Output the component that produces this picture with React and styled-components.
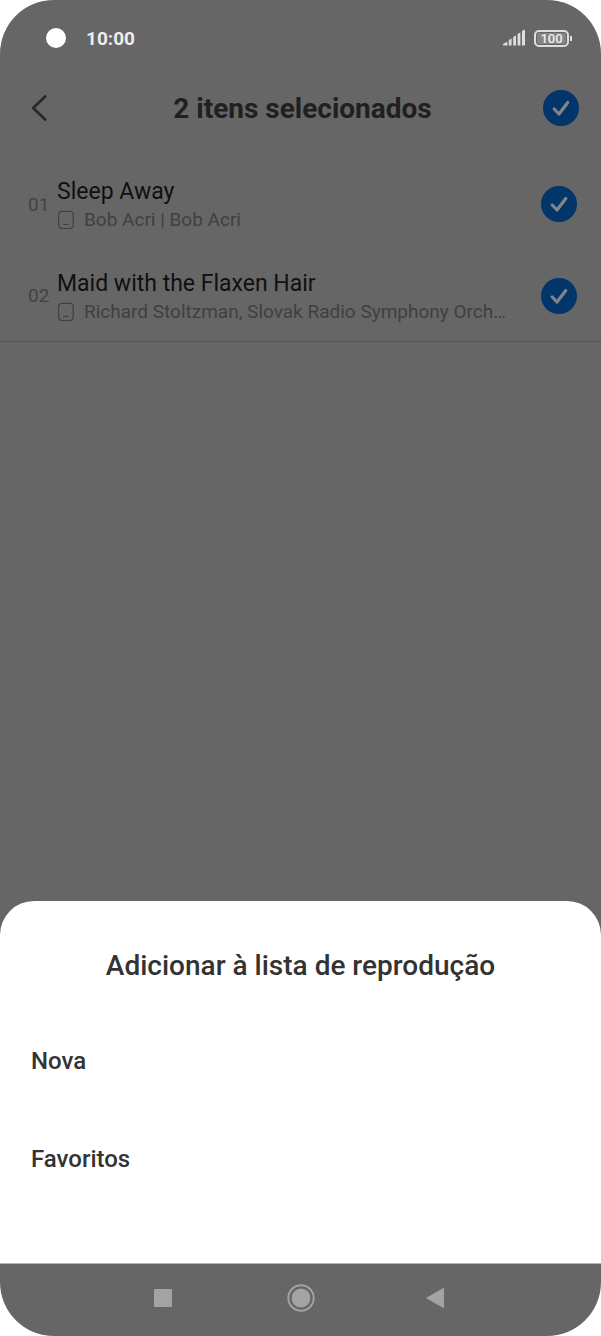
import styled, { createGlobalStyle } from "styled-components"

const GlobalStyle = createGlobalStyle`
    *{
        box-sizing: border-box;
    }
    body{
        margin: 0;
        background-color: #ffffff;
        font-family: Roboto, "Noto Sans", sans-serif;
    }
    button{
        border: none;
        padding: 0;
        background: none;
        font-family: inherit;
        cursor: pointer;
    }
`;

const Phone = styled.div`
    min-height: 100vh;
    display: flex;
    flex-direction: column;
    background-color: #666666;
    border-radius: 54px;
    overflow: hidden;
`;

const StatusBar = styled.div`
    height: 76px;
    display: flex;
    align-items: center;
    padding: 0 29px 0 46px;
`;

const Camera = styled.span`
    width: 20px;
    height: 20px;
    border-radius: 50%;
    background-color: #ffffff;
    margin-right: 20px;
`;

const Clock = styled.span`
    flex: 1;
    font-size: 19px;
    font-weight: 700;
    color: #ececec;
`;

const StatusIcons = styled.div`
    display: flex;
    align-items: center;
    gap: 8px;
`;

const Battery = styled.div`
    display: flex;
    align-items: center;
    gap: 1px;
    &:after{
        content: "";
        width: 2px;
        height: 5px;
        background-color: #dedede;
    }
`;

const BatteryLevel = styled.span`
    width: 35px;
    height: 17px;
    border: 2px solid #dedede;
    border-radius: 5px;
    background-color: #858585;
    box-shadow: inset 0 0 0 1px #666666;
    font-size: 13px;
    font-weight: 500;
    line-height: 14px;
    text-align: center;
    color: #f0f0f0;
`;

const Header = styled.header`
    height: 64px;
    display: grid;
    grid-template-columns: 36px 1fr 36px;
    align-items: center;
    padding: 0 22px;
    margin-bottom: 18px;
`;

const BackButton = styled.button`
    height: 36px;
    display: flex;
    align-items: center;
    justify-content: center;
`;

const Title = styled.h1`
    margin: 0;
    padding: 2px 0 0 4px;
    font-size: 28px;
    line-height: 32px;
    font-weight: 700;
    text-align: center;
    color: #202020;
`;

const CheckLabel = styled.label`
    display: grid;
    width: 36px;
    height: 36px;
    cursor: pointer;
    > *{
        grid-area: 1 / 1;
    }
    svg{
        pointer-events: none;
    }
`;

const CheckInput = styled.input`
    appearance: none;
    width: 36px;
    height: 36px;
    margin: 0;
    border: 2px solid #4a4a4a;
    border-radius: 50%;
    &:checked{
        border: none;
        background-color: #02366b;
    }
    &:not(:checked) + svg{
        visibility: hidden;
    }
`;

const SongList = styled.ul`
    margin: 0;
    padding: 0;
    list-style: none;
`;

const SongRow = styled.li`
    height: 92px;
    display: flex;
    align-items: center;
    padding: 0 24px 0 28px;
    &:last-child{
        border-bottom: 1px solid #575757;
    }
`;

const SongNumber = styled.span`
    width: 29px;
    font-size: 19px;
    color: #424242;
`;

const SongInfo = styled.div`
    flex: 1;
    min-width: 0;
    margin-right: 28px;
    padding-top: 2px;
`;

const SongTitle = styled.div`
    font-size: 23px;
    line-height: 30px;
    color: #101010;
`;

const SongArtist = styled.div`
    display: flex;
    align-items: center;
    gap: 9px;
    font-size: 19px;
    line-height: 26px;
    color: #404040;
    svg{
        flex: none;
    }
    span{
        overflow: hidden;
        text-overflow: ellipsis;
        white-space: nowrap;
    }
`;

const Sheet = styled.section`
    margin-top: auto;
    padding: 49px 31px 55px;
    background-color: #ffffff;
    border-radius: 34px 34px 0 0;
`;

const SheetTitle = styled.h2`
    margin: 0 0 30px;
    font-size: 28px;
    line-height: 32px;
    font-weight: 500;
    text-align: center;
    color: #333333;
`;

const SheetOption = styled.button`
    display: block;
    width: 100%;
    height: 98px;
    font-size: 24px;
    font-weight: 500;
    text-align: left;
    color: #333333;
`;

const NavBar = styled.nav`
    height: 73px;
    display: flex;
    align-items: center;
    justify-content: center;
    gap: 102px;
    padding-bottom: 4px;
    border-top: 1px solid #b4b4b4;
`;

const NavButton = styled.button`
    width: 34px;
    height: 34px;
    display: flex;
    align-items: center;
    justify-content: center;
`;

const songs = [
  { number: "01", title: "Sleep Away", artist: "Bob Acri | Bob Acri" },
  {
    number: "02",
    title: "Maid with the Flaxen Hair",
    artist: "Richard Stoltzman, Slovak Radio Symphony Orch…",
  },
];

const Check = ({ label }) => (
  <CheckLabel>
    <CheckInput type="checkbox" defaultChecked aria-label={label} />
    <svg width="36" height="36" viewBox="0 0 36 36" fill="none" aria-hidden="true">
      <path d="M11.2 19 L16 24 L24.8 12.5" stroke="#848484" strokeWidth="3.2" strokeLinecap="round" strokeLinejoin="round" />
    </svg>
  </CheckLabel>
);

const Signal = () => (
  <svg width="24" height="18" viewBox="0 0 24 18" fill="#dedede" aria-hidden="true">
    <path d="M1.4 14.8 L5.4 12.8 V16.6 H1.4 Q0.2 16 1.4 14.8Z" />
    <path d="M6.8 11 L9.6 9.6 V16.6 H6.8Z" />
    <path d="M11.2 8 L14 6.4 V16.6 H11.2Z" />
    <path d="M15.6 5 L18.4 3.6 V16.6 H15.6Z" />
    <path d="M20 2.2 Q22.8 0 23 1.4 V16 L22.4 16.6 H20Z" />
  </svg>
);

const DeviceIcon = () => (
  <svg width="18" height="20" viewBox="0 0 18 20" fill="none" stroke="#404040" aria-hidden="true">
    <rect x="1.6" y="1.3" width="14.6" height="17.2" rx="3.4" strokeWidth="1.2" />
    <path d="M6.2 14.5 H11.6" strokeWidth="1.2" />
  </svg>
);

const App = () => {
  return (
    <>
      <GlobalStyle />
      <Phone>
        <StatusBar>
          <Camera />
          <Clock>10:00</Clock>
          <StatusIcons>
            <Signal />
            <Battery>
              <BatteryLevel>100</BatteryLevel>
            </Battery>
          </StatusIcons>
        </StatusBar>

        <Header>
          <BackButton aria-label="Voltar">
            <svg width="36" height="36" viewBox="0 0 36 36" fill="none" aria-hidden="true">
              <path d="M23.2 6.6 L11.2 18 L23.2 29.4" stroke="#2a2a2a" strokeWidth="2.8" strokeLinecap="round" strokeLinejoin="round" />
            </svg>
          </BackButton>
          <Title>2 itens selecionados</Title>
          <Check label="Selecionar tudo" />
        </Header>

        <SongList>
          {songs.map((song) => (
            <SongRow key={song.number}>
              <SongNumber>{song.number}</SongNumber>
              <SongInfo>
                <SongTitle>{song.title}</SongTitle>
                <SongArtist>
                  <DeviceIcon />
                  <span>{song.artist}</span>
                </SongArtist>
              </SongInfo>
              <Check label={song.title} />
            </SongRow>
          ))}
        </SongList>

        <Sheet>
          <SheetTitle>Adicionar à lista de reprodução</SheetTitle>
          <SheetOption>Nova</SheetOption>
          <SheetOption>Favoritos</SheetOption>
        </Sheet>

        <NavBar>
          <NavButton aria-label="Recentes">
            <svg width="34" height="34" viewBox="0 0 34 34" aria-hidden="true">
              <rect x="6" y="8" width="18" height="18" rx="0.6" fill="#a3a3a3" />
            </svg>
          </NavButton>
          <NavButton aria-label="Início">
            <svg width="34" height="34" viewBox="0 0 34 34" aria-hidden="true">
              <circle cx="17" cy="17" r="12.7" fill="none" stroke="#a3a3a3" strokeWidth="1.9" />
              <circle cx="17" cy="17" r="9.4" fill="#a3a3a3" />
            </svg>
          </NavButton>
          <NavButton aria-label="Voltar">
            <svg width="34" height="34" viewBox="0 0 34 34" aria-hidden="true">
              <path d="M6.6 17 L23.6 7.2 V26.8Z" fill="#a3a3a3" stroke="#a3a3a3" strokeWidth="0.8" strokeLinejoin="round" />
            </svg>
          </NavButton>
        </NavBar>
      </Phone>
    </>
  )
}

export default App
